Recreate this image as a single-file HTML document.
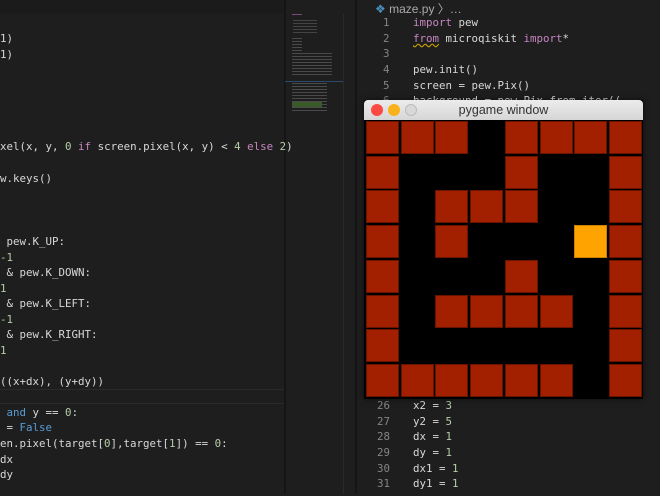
<!DOCTYPE html>
<html><head><style>
*{margin:0;padding:0;box-sizing:border-box}
body{width:660px;height:494px;overflow:hidden;background:#1e1e1e;position:relative;font-family:"DejaVu Sans Mono","Liberation Mono",monospace;font-size:10.8px;color:#d8d8d8}
.abs{position:absolute;white-space:pre}
.t{position:absolute;left:0;top:2px;width:660px;height:494px}
.k{color:#c586c0}.n{color:#b5cea8}.b{color:#569cd6}.ln{color:#858585}
.cell{position:absolute;width:33px;height:33px;background:#a21f00;border:1px solid #6a1400}
</style></head><body>
<div class="abs" style="left:0;top:0;width:284px;height:14px;background:#1b1b1b"></div>
<div class="abs" style="left:284px;top:0;width:2px;height:494px;background:#151515"></div>
<div class="abs" style="left:343px;top:14px;width:1px;height:480px;background:#2a2a2a"></div>
<div class="abs" style="left:355px;top:0;width:2px;height:494px;background:#151515"></div>
<div class="abs" style="left:0;top:389px;width:284px;height:1px;background:#2a2a2a"></div>
<div class="abs" style="left:0;top:403px;width:284px;height:1px;background:#2a2a2a"></div>
<!-- minimap -->
<div class="abs" style="left:292px;top:14px;width:10px;height:1px;background:#7a4a7a"></div>
<div class="abs" style="left:293px;top:20px;width:24px;height:14px;background:repeating-linear-gradient(#444 0 1px,transparent 1px 3px)"></div>
<div class="abs" style="left:292px;top:38px;width:10px;height:14px;background:repeating-linear-gradient(#4a4a4a 0 1px,transparent 1px 3px)"></div>
<div class="abs" style="left:292px;top:53px;width:40px;height:24px;background:repeating-linear-gradient(#4a4a4a 0 1px,transparent 1px 3px)"></div>
<div class="abs" style="left:285px;top:81px;width:58px;height:1px;background:#2a4a6a"></div>
<div class="abs" style="left:292px;top:83px;width:35px;height:28px;background:repeating-linear-gradient(#4a4a4a 0 1px,transparent 1px 3px)"></div>
<div class="abs" style="left:292px;top:102px;width:30px;height:5px;background:#3a5a2a"></div>

<div class="t">
<div class="abs" style="left:0;top:30px">1)</div>
<div class="abs" style="left:0;top:46px">1)</div>
<div class="abs" style="left:0;top:138px">xel(x, y, <span class="n">0</span> <span class="k">if</span> screen.pixel(x, y) &lt; <span class="n">4</span> <span class="k">else</span> <span class="n">2</span>)</div>
<div class="abs" style="left:0;top:170px">w.keys()</div>
<div class="abs" style="left:0;top:233px"> pew.K_UP:</div>
<div class="abs" style="left:0;top:249px"><span class="n">-1</span></div>
<div class="abs" style="left:0;top:264px"> &amp; pew.K_DOWN:</div>
<div class="abs" style="left:0;top:280px"><span class="n">1</span></div>
<div class="abs" style="left:0;top:295px"> &amp; pew.K_LEFT:</div>
<div class="abs" style="left:0;top:311px"><span class="n">-1</span></div>
<div class="abs" style="left:0;top:326px"> &amp; pew.K_RIGHT:</div>
<div class="abs" style="left:0;top:342px"><span class="n">1</span></div>
<div class="abs" style="left:0;top:373px">((x+dx), (y+dy))</div>
<div class="abs" style="left:0;top:404px"> <span class="b">and</span> y == <span class="n">0</span>:</div>
<div class="abs" style="left:0;top:419px"> = <span class="b">False</span></div>
<div class="abs" style="left:0;top:435px">en.pixel(target[<span class="n">0</span>],target[<span class="n">1</span>]) == <span class="n">0</span>:</div>
<div class="abs" style="left:0;top:451px">dx</div>
<div class="abs" style="left:0;top:466px">dy</div>

<div class="abs ln" style="left:383px;top:14px">1</div><div class="abs" style="left:413px;top:14px"><span class="k">import</span> pew</div>
<div class="abs ln" style="left:383px;top:30px">2</div><div class="abs" style="left:413px;top:30px"><span class="k" style="text-decoration:underline wavy #c8a000">from</span> microqiskit <span class="k">import</span>*</div>
<div class="abs ln" style="left:383px;top:45px">3</div>
<div class="abs ln" style="left:383px;top:61px">4</div><div class="abs" style="left:413px;top:61px">pew.init()</div>
<div class="abs ln" style="left:383px;top:77px">5</div><div class="abs" style="left:413px;top:77px">screen = pew.Pix()</div>
<div class="abs ln" style="left:383px;top:92px">6</div><div class="abs" style="left:413px;top:92px">background = pew.Pix.from_iter((</div>
<div class="abs ln" style="left:377px;top:381px">25</div><div class="abs" style="left:413px;top:381px">y1 = <span class="n">2</span></div>
<div class="abs ln" style="left:377px;top:397px">26</div><div class="abs" style="left:413px;top:397px">x2 = <span class="n">3</span></div>
<div class="abs ln" style="left:377px;top:413px">27</div><div class="abs" style="left:413px;top:413px">y2 = <span class="n">5</span></div>
<div class="abs ln" style="left:377px;top:428px">28</div><div class="abs" style="left:413px;top:428px">dx = <span class="n">1</span></div>
<div class="abs ln" style="left:377px;top:444px">29</div><div class="abs" style="left:413px;top:444px">dy = <span class="n">1</span></div>
<div class="abs ln" style="left:377px;top:460px">30</div><div class="abs" style="left:413px;top:460px">dx1 = <span class="n">1</span></div>
<div class="abs ln" style="left:377px;top:475px">31</div><div class="abs" style="left:413px;top:475px">dy1 = <span class="n">1</span></div>
</div>

<div class="abs" style="left:375px;top:0;font-family:'Liberation Sans',sans-serif;font-size:12px;color:#aaa"><span style="color:#4a8fc0">❖</span> maze.py 〉…</div>

<!-- pygame window -->
<div class="abs" style="left:364px;top:100px;width:279px;height:299px;background:#000;box-shadow:0 0 6px rgba(0,0,0,.6)">
<div style="position:absolute;left:0;top:0;width:279px;height:20px;background:linear-gradient(#ececec,#d6d6d6);border-radius:4px 4px 0 0;font-family:'Liberation Sans',sans-serif;font-size:12.5px;color:#333;text-align:center;line-height:20px">pygame window
<div style="position:absolute;left:7px;top:4px;width:12px;height:12px;border-radius:50%;background:#fc4a43"></div>
<div style="position:absolute;left:24px;top:4px;width:12px;height:12px;border-radius:50%;background:#f9b21c"></div>
<div style="position:absolute;left:41px;top:4px;width:12px;height:12px;border-radius:50%;background:#d8d8d8;border:1px solid #bbb"></div>
</div>
<div id="g" style="position:absolute;left:2px;top:21px"></div>
</div>
<script>
var m=["RRR.RRRR","R...R..R","R.RRR..R","R.R...YR","R...R..R","R.RRRR.R","R......R","RRRRRR.R"];
var h="";for(var j=0;j<8;j++)for(var i=0;i<8;i++){var c=m[j][i];if(c==".")continue;
h+='<div class="cell" style="left:'+(i*34.7).toFixed(1)+'px;top:'+(j*34.7).toFixed(1)+'px;'+(c=="Y"?'background:#ffa300;border-color:#cc8200':'')+'"></div>';}
document.getElementById("g").innerHTML=h;
</script>
</body></html>
